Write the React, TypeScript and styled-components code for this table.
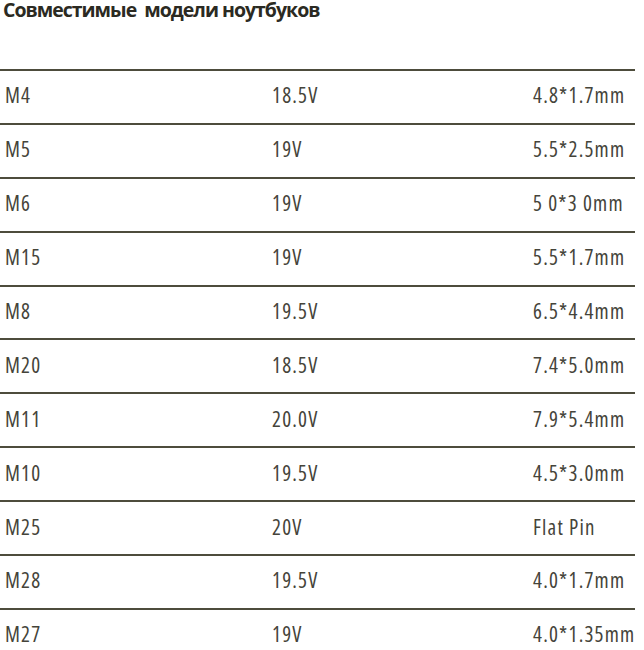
import * as React from 'react';
import styled, { createGlobalStyle } from 'styled-components';

const GlobalStyle = createGlobalStyle`
  html, body {
    margin: 0;
    padding: 0;
    background: #ffffff;
  }
  body {
    font-family: "Open Sans", "DejaVu Sans Condensed", sans-serif;
    color: #45443a;
  }
`;

const Page = styled.div`
  width: 644px;
  height: 650px;
  overflow: hidden;
`;

const Title = styled.h1`
  margin: 0 0 0 3px;
  font-size: 19.5px;
  font-weight: 700;
  line-height: 20px;
  letter-spacing: -1px;
  color: #2b2a22;
  white-space: pre;
`;

const Table = styled.div`
  margin-top: 49px;
  width: 635px;
`;

const Row = styled.div`
  display: grid;
  grid-template-columns: 267px 261px 1fr;
  align-items: center;
  box-sizing: border-box;
  height: 53.9px;
  padding: 0 0 3px 5px;
  border-top: 2px solid #4d4c3c;
  font-size: 21px;
  font-stretch: 75%;
  letter-spacing: 1.2px;
  color: #45443a;
`;

const Cell = styled.span`
  white-space: nowrap;
`;

const rows: [string, string, string][] = [
  ['M4', '18.5V', '4.8*1.7mm'],
  ['M5', '19V', '5.5*2.5mm'],
  ['M6', '19V', '5 0*3 0mm'],
  ['M15', '19V', '5.5*1.7mm'],
  ['M8', '19.5V', '6.5*4.4mm'],
  ['M20', '18.5V', '7.4*5.0mm'],
  ['M11', '20.0V', '7.9*5.4mm'],
  ['M10', '19.5V', '4.5*3.0mm'],
  ['M25', '20V', 'Flat Pin'],
  ['M28', '19.5V', '4.0*1.7mm'],
  ['M27', '19V', '4.0*1.35mm'],
];

export default function App() {
  return (
    <>
      <GlobalStyle />
      <Page>
        <Title>{'Совместимые  модели ноутбуков'}</Title>
        <Table>
          {rows.map(([model, volt, size]) => (
            <Row key={model}>
              <Cell>{model}</Cell>
              <Cell>{volt}</Cell>
              <Cell>{size}</Cell>
            </Row>
          ))}
        </Table>
      </Page>
    </>
  );
}
